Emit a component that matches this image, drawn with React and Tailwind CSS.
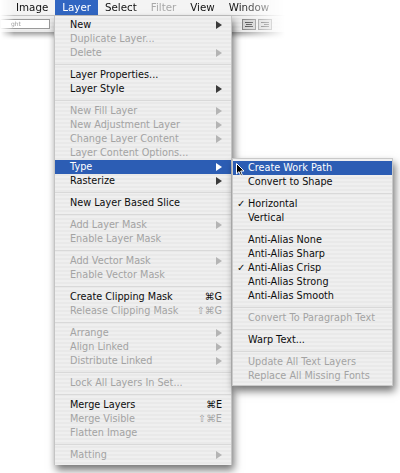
import React from 'react';

const stripes =
  'bg-[repeating-linear-gradient(180deg,#efefef_0px,#efefef_2px,#e9e9e9_2px,#e9e9e9_4px)]';

const layerMenu = [
  { t: 'New', sub: true },
  { t: 'Duplicate Layer...', d: true },
  { t: 'Delete', d: true, sub: true },
  'sep',
  { t: 'Layer Properties...' },
  { t: 'Layer Style', sub: true },
  'sep',
  { t: 'New Fill Layer', d: true, sub: true },
  { t: 'New Adjustment Layer', d: true, sub: true },
  { t: 'Change Layer Content', d: true, sub: true },
  { t: 'Layer Content Options...', d: true },
  { t: 'Type', sub: true, hi: true },
  { t: 'Rasterize', sub: true },
  'sep',
  { t: 'New Layer Based Slice' },
  'sep',
  { t: 'Add Layer Mask', d: true, sub: true },
  { t: 'Enable Layer Mask', d: true },
  'sep',
  { t: 'Add Vector Mask', d: true, sub: true },
  { t: 'Enable Vector Mask', d: true },
  'sep',
  { t: 'Create Clipping Mask', k: '⌘G' },
  { t: 'Release Clipping Mask', d: true, k: '⇧⌘G' },
  'sep',
  { t: 'Arrange', d: true, sub: true },
  { t: 'Align Linked', d: true, sub: true },
  { t: 'Distribute Linked', d: true, sub: true },
  'sep',
  { t: 'Lock All Layers In Set...', d: true },
  'sep',
  { t: 'Merge Layers', k: '⌘E' },
  { t: 'Merge Visible', d: true, k: '⇧⌘E' },
  { t: 'Flatten Image', d: true },
  'sep',
  { t: 'Matting', d: true, sub: true },
];

const typeMenu = [
  { t: 'Create Work Path', hi: true },
  { t: 'Convert to Shape' },
  'sep',
  { t: 'Horizontal', check: true },
  { t: 'Vertical' },
  'sep',
  { t: 'Anti-Alias None' },
  { t: 'Anti-Alias Sharp' },
  { t: 'Anti-Alias Crisp', check: true },
  { t: 'Anti-Alias Strong' },
  { t: 'Anti-Alias Smooth' },
  'sep',
  { t: 'Convert To Paragraph Text', d: true },
  'sep',
  { t: 'Warp Text...' },
  'sep',
  { t: 'Update All Text Layers', d: true },
  { t: 'Replace All Missing Fonts', d: true },
];

const Arrow = ({ color }) => (
  <svg width="6" height="8" viewBox="0 0 6 8">
    <polygon points="0,0 6,4 0,8" fill={color} />
  </svg>
);

const Row = ({ item }) => {
  if (item === 'sep') {
    return (
      <div className="h-[8px] flex items-center">
        <div className="h-px w-full bg-[#d9d9d9]" />
      </div>
    );
  }
  const textColor = item.hi ? 'text-white' : item.d ? 'text-[#a3a3a3]' : 'text-[#0d0d0d]';
  const arrowColor = item.hi ? '#fff' : item.d ? '#b4b4b4' : '#3a3a3a';
  return (
    <div
      className={`relative h-[14px] flex items-center pl-[15px] pr-[9px] ${
        item.hi ? 'bg-[#2c5db4]' : ''
      } ${textColor}`}
    >
      {item.check && (
        <span className="absolute left-[4px] top-0 leading-[14px] text-[10px] font-bold">✓</span>
      )}
      <span className="flex-1 whitespace-nowrap leading-[14px]">{item.t}</span>
      {item.k && <span className="leading-[14px]">{item.k}</span>}
      {item.sub && <Arrow color={arrowColor} />}
    </div>
  );
};

export default function App() {
  const bar = [
    { t: 'Image' },
    { t: 'Layer', hi: true },
    { t: 'Select' },
    { t: 'Filter', d: true },
    { t: 'View' },
    { t: 'Window' },
  ];

  return (
    <div className="relative w-[400px] h-[473px] bg-white overflow-hidden font-['DejaVu_Sans',sans-serif]">
      {/* menu bar + toolbar, fading out to the right */}
      <div className="w-[290px] pb-[8px] [mask-image:linear-gradient(to_right,transparent_0px,black_14px,black_240px,transparent_285px)]">
        <div className="h-[16px] flex items-stretch pl-[9px] bg-[#f4f4f4] border-b border-[#c9c9c9] text-[10.3px]">
          {bar.map((b) => (
            <div
              key={b.t}
              className={`px-[7px] flex items-center ${
                b.hi ? 'bg-[#3166c2] text-white' : b.d ? 'text-[#a8a8a8]' : 'text-[#111]'
              }`}
            >
              {b.t}
            </div>
          ))}
        </div>
        <div className={`h-[16px] flex items-center gap-[4px] ${stripes} shadow-[0_3px_5px_rgba(0,0,0,0.4)]`}>
          <div className="w-[50px] h-[10px] bg-white border border-[#9a9a9a] text-[6px] text-[#999] pl-[10px] leading-[8px]">
            ght
          </div>
          <div className="ml-auto mr-[18px] flex gap-[2px]">
            <div className="w-[14px] h-[11px] bg-[#cfcfcf] border border-[#7f7f7f] flex flex-col justify-center items-center gap-[1px]">
              <div className="w-[8px] h-px bg-[#444]" />
              <div className="w-[6px] h-px bg-[#444]" />
              <div className="w-[8px] h-px bg-[#444]" />
            </div>
            <div className="w-[14px] h-[11px] bg-[#cfcfcf] border border-[#7f7f7f] flex flex-col justify-center items-end pr-[2px] gap-[1px]">
              <div className="w-[8px] h-px bg-[#444]" />
              <div className="w-[5px] h-px bg-[#444]" />
              <div className="w-[8px] h-px bg-[#444]" />
            </div>
          </div>
        </div>
      </div>

      {/* Layer menu */}
      <div
        className={`absolute left-[54px] top-[16px] w-[178px] pt-[2px] pb-[3px] ${stripes} text-[9.7px] shadow-[2px_5px_8px_rgba(0,0,0,0.55)] border-x border-[#c4c4c4]`}
      >
        {layerMenu.map((it, i) => (
          <Row key={i} item={it} />
        ))}
      </div>

      {/* Type submenu */}
      <div
        className={`absolute left-[232px] top-[158px] w-[161px] pt-[2px] pb-[2px] ${stripes} text-[9.7px] shadow-[2px_5px_8px_rgba(0,0,0,0.55)] border border-[#c9c9c9]`}
      >
        {typeMenu.map((it, i) => (
          <Row key={i} item={it} />
        ))}
      </div>

      {/* mouse pointer */}
      <svg className="absolute left-[236px] top-[163px]" width="9" height="14" viewBox="0 0 9 14">
        <path d="M0.5 0.5 L0.5 11 L3 8.6 L4.8 13 L6.4 12.3 L4.7 8 L8 8 Z" fill="#000" stroke="#fff" strokeWidth="1" />
      </svg>
    </div>
  );
}
